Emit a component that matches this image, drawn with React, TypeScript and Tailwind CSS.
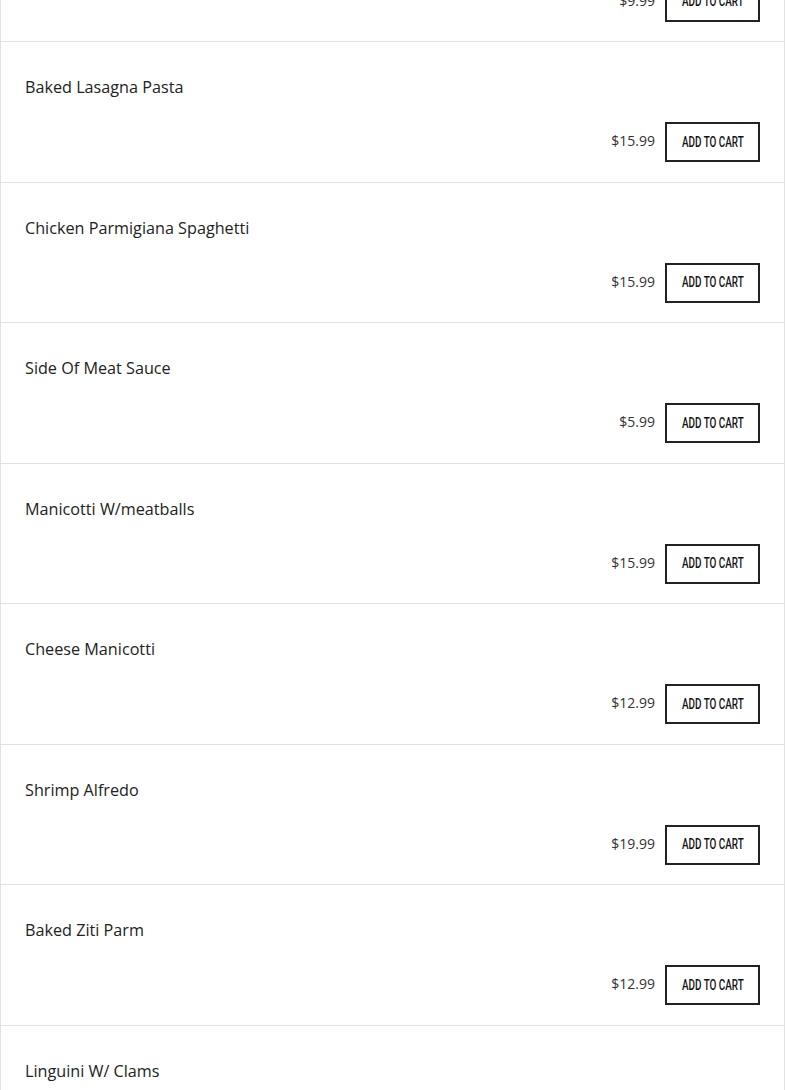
import React from "react";

const items = [
  { name: "Spaghetti W/ Marinara", price: "$9.99" },
  { name: "Baked Lasagna Pasta", price: "$15.99" },
  { name: "Chicken Parmigiana Spaghetti", price: "$15.99" },
  { name: "Side Of Meat Sauce", price: "$5.99" },
  { name: "Manicotti W/meatballs", price: "$15.99" },
  { name: "Cheese Manicotti", price: "$12.99" },
  { name: "Shrimp Alfredo", price: "$19.99" },
  { name: "Baked Ziti Parm", price: "$12.99" },
  { name: "Linguini W/ Clams", price: "$15.99" },
];

export default function App() {
  return (
    <div className="w-[785px] h-[1090px] overflow-hidden bg-white">
      <div className="-mt-[98.5px] border-x border-[#e2e2e2]">
        {items.map((it, i) => (
          <div
            key={i}
            className="h-[140.5px] border-b border-[#e2e2e2] px-6 pt-[33px] flex flex-col"
          >
            <div className="font-['Open_Sans',sans-serif] text-[16.2px] leading-[24px] text-[#222]">
              {it.name}
            </div>
            <div className="mt-[23px] flex items-center justify-end gap-[10px]">
              <span className="font-['Open_Sans',sans-serif] text-[14px] leading-[20px] text-[#333] -mt-[2px]">
                {it.price}
              </span>
              <button className="w-[95px] h-[40px] border-2 border-[#222] bg-white flex items-center justify-center">
                <span className="inline-block font-['Roboto',sans-serif] font-medium text-[15px] leading-none text-[#111] scale-x-[0.66] whitespace-nowrap">
                  ADD TO CART
                </span>
              </button>
            </div>
          </div>
        ))}
      </div>
    </div>
  );
}
